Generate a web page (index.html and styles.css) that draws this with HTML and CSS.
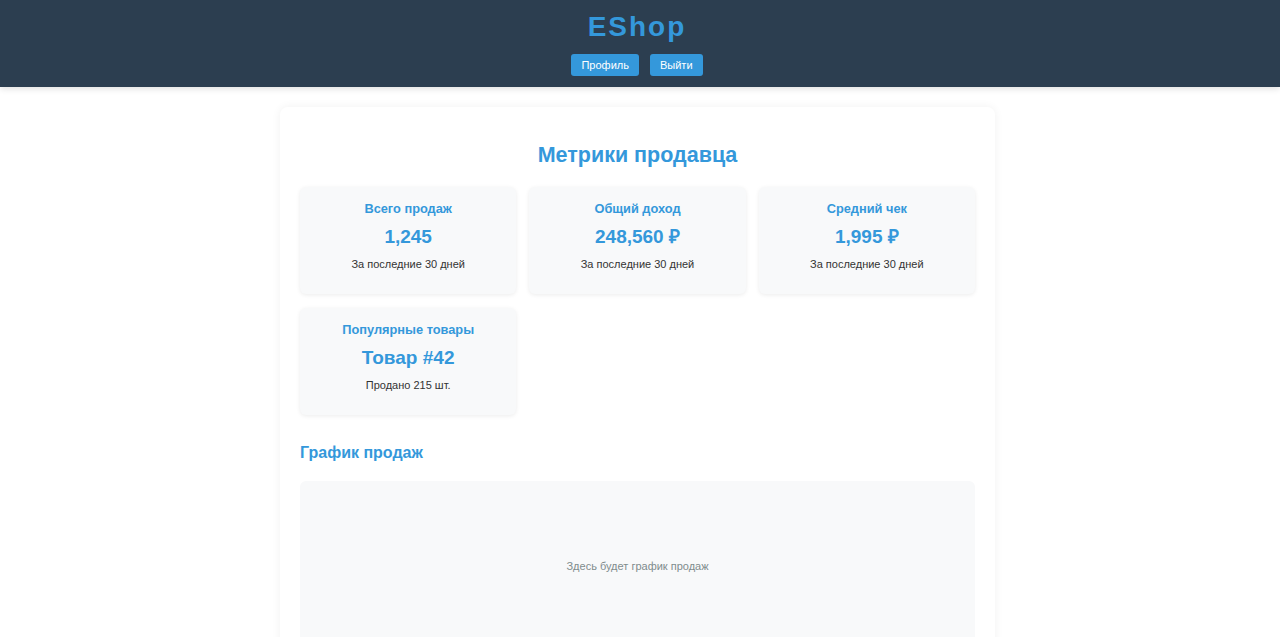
FILE: index.html
```html
<!DOCTYPE html>
<html lang="ru">
<head>
<meta charset="utf-8">
<title>EShop — Метрики продавца</title>
<link rel="stylesheet" href="styles.css">
</head>
<body>
<header class="site-header">
  <h1 class="logo">EShop</h1>
  <nav class="nav">
    <button class="btn">Профиль</button>
    <button class="btn">Выйти</button>
  </nav>
</header>
<div class="page">
  <main class="container">
    <h2 class="page-title">Метрики продавца</h2>
    <section class="metrics">
      <div class="card">
        <h3 class="card-title">Всего продаж</h3>
        <div class="card-value">1,245</div>
        <p class="card-note">За последние 30 дней</p>
      </div>
      <div class="card">
        <h3 class="card-title">Общий доход</h3>
        <div class="card-value">248,560 ₽</div>
        <p class="card-note">За последние 30 дней</p>
      </div>
      <div class="card">
        <h3 class="card-title">Средний чек</h3>
        <div class="card-value">1,995 ₽</div>
        <p class="card-note">За последние 30 дней</p>
      </div>
      <div class="card">
        <h3 class="card-title">Популярные товары</h3>
        <div class="card-value">Товар #42</div>
        <p class="card-note">Продано 215 шт.</p>
      </div>
    </section>
    <h3 class="section-title">График продаж</h3>
    <div class="chart">Здесь будет график продаж</div>
  </main>
</div>
</body>
</html>
```

FILE: styles.css
```css
* { box-sizing: border-box; }
html, body { margin: 0; padding: 0; }
body {
  font-family: "Liberation Sans", Arial, sans-serif;
  background: #fff;
  color: #333;
}
.site-header {
  background: #2c3e50;
  height: 87px;
  display: flex;
  flex-direction: column;
  align-items: center;
  padding: 10px 6px 0 0;
  box-shadow: 0 2px 6px rgba(0,0,0,0.12);
}
.logo {
  margin: 0;
  color: #3498db;
  font-size: 28px;
  line-height: 34px;
  font-weight: bold;
  letter-spacing: 2px;
}
.nav {
  display: flex;
  gap: 11px;
  margin-top: 10px;
}
.btn {
  background: #3498db;
  color: #fff;
  border: none;
  border-radius: 3px;
  font-family: "Liberation Sans", Arial, sans-serif;
  font-size: 11px;
  line-height: 14px;
  padding: 4px 10px;
  height: 22px;
}
.page {
  padding-right: 5px;
}
.container {
  width: 715px;
  margin: 20px auto 0;
  background: #fff;
  border-radius: 8px;
  box-shadow: 0 0 10px rgba(0,0,0,0.06);
  padding: 20px 20px 40px;
}
.page-title {
  margin: 14px 0 18px;
  text-align: center;
  color: #3498db;
  font-size: 21.5px;
  line-height: 28px;
}
.metrics {
  display: grid;
  grid-template-columns: repeat(3, 1fr);
  gap: 14px 13px;
}
.card {
  background: #f8f9fa;
  border-radius: 6px;
  box-shadow: 0 1px 4px rgba(0,0,0,0.08);
  height: 107px;
  padding: 14px 10px 0;
  text-align: center;
}
.card-title {
  margin: 0;
  color: #3498db;
  font-size: 12.8px;
  line-height: 15px;
}
.card-value {
  margin-top: 10px;
  color: #3498db;
  font-size: 19px;
  font-weight: bold;
  line-height: 22px;
}
.card-note {
  margin: 9px 0 0;
  font-size: 11px;
  line-height: 14px;
  color: #333;
}
.section-title {
  margin: 28px 0 18px;
  color: #3498db;
  font-size: 16px;
  line-height: 20px;
}
.chart {
  background: #f8f9fa;
  border-radius: 6px;
  height: 170px;
  display: flex;
  align-items: center;
  justify-content: center;
  font-size: 11px;
  color: #7f8c8d;
}
```
